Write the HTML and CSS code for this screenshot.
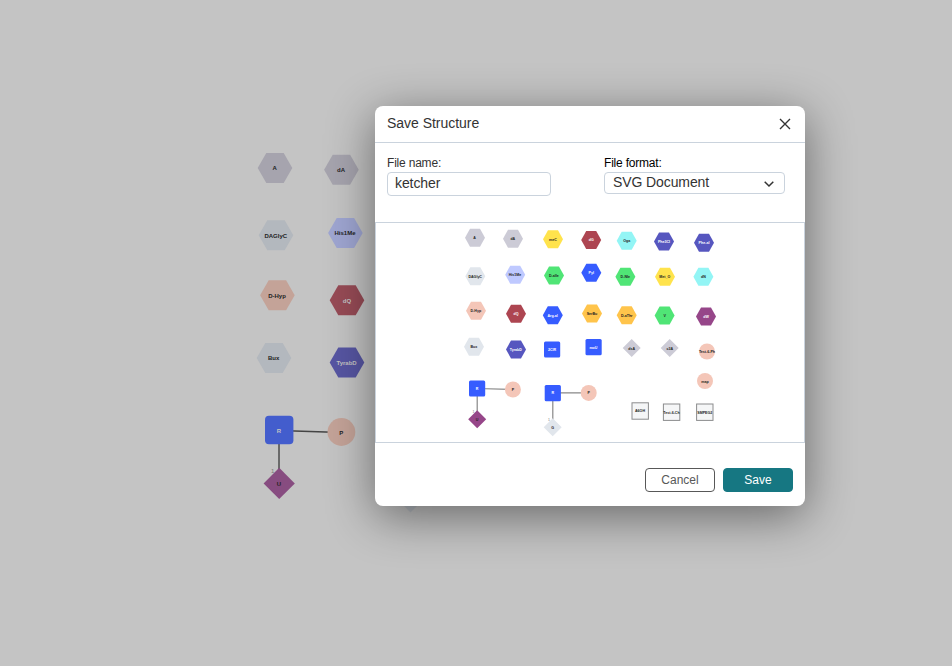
FILE: index.html
```
<!DOCTYPE html>
<html lang="en">
<head>
<meta charset="utf-8">
<title>Save Structure</title>
<link rel="stylesheet" href="styles.css">
</head>
<body>
<svg class="canvas" viewBox="0 0 952 666" aria-hidden="true">
  <defs>
    <path id="hex" d="M-10 0-5-9H5L10 0 5 9H-5Z"/>
    <path id="bighex" d="M-17.3 0-8.7-15H8.7L17.3 0 8.7 15H-8.7Z"/>
    <path id="diamond" d="M0-9 9 0 0 9-9 0Z"/>
  </defs>
  <g class="bond"><path d="M279 430V484M279 430.5 341 432.5"/></g>
  <use href="#bighex" x="275" y="168" fill="#a6a4ae"/>
  <use href="#bighex" x="341.4" y="169.8" fill="#a6a4ae"/>
  <use href="#bighex" x="276" y="235.2" fill="#b3b8be"/>
  <use href="#bighex" x="345.4" y="233" fill="#9fa6d2"/>
  <use href="#bighex" x="277.4" y="295.2" fill="#c4a398"/>
  <use href="#bighex" x="347" y="300.3" fill="#974b56"/>
  <use href="#bighex" x="274" y="358" fill="#b3b8be"/>
  <use href="#bighex" x="347" y="362.5" fill="#5756a3"/>
  <rect x="265" y="415.8" width="28.4" height="28.4" rx="4" fill="#435dcd"/>
  <circle cx="341.4" cy="432" r="13.9" fill="#c4a398"/>
  <path d="M279.2 467.8 294.8 483.5 279.2 499 263.6 483.5Z" fill="#874c80"/>
  <path d="M410.5 481.5 426 497 410.5 512.5 395 497Z" fill="#b3b8be"/>
  <g class="label big">
    <text x="274.6" y="170.3">A</text><text x="341" y="172.3">dA</text>
    <text x="275.8" y="238.3">DAGlyC</text><text x="345" y="235.3">His1Me</text>
    <text x="277" y="298.3">D-Hyp</text><text x="273.6" y="360.3">Bux</text>
    <text x="341.2" y="435.3">P</text><text x="279" y="486.3">U</text>
    <g class="pale"><text x="347" y="303.3">dQ</text><text x="346.6" y="365.3">TyrabD</text><text x="279" y="433.3">R</text></g>
  </g>
  <text class="index" x="271" y="473">1</text>
</svg>
<main class="dialog" role="dialog" aria-labelledby="title">
  <header class="header">
    <h1 id="title">Save Structure</h1>
    <svg class="close" viewBox="0 0 12 12"><path d="M1 1 11 11M11 1 1 11"/></svg>
  </header>
  <section class="fields">
    <div class="field name">
      <label>File name:</label>
      <div class="box"><span>ketcher</span></div>
    </div>
    <div class="field format">
      <label>File format:</label>
      <div class="box"><span>SVG Document</span>
        <svg class="chevron" viewBox="0 0 12 8"><path d="M1.7 1.7 6 6 10.3 1.7"/></svg>
      </div>
    </div>
  </section>
  <svg class="preview" viewBox="376 223 428 219">
    <g class="thin-bond"><path d="M477.2 388V419M477 388.5 513 389.5M552.8 393V427M553 392.8H589"/></g>
    <g fill="#cccbd6">
      <use href="#hex" x="475" y="237.8"/><use href="#hex" x="513" y="238.7"/>
      <use href="#diamond" x="631.7" y="348"/><use href="#diamond" x="669.7" y="348"/>
    </g>
    <g fill="#ffe34c"><use href="#hex" x="553" y="239.3"/><use href="#hex" x="665" y="276.7"/></g>
    <g fill="#ad4551"><use href="#hex" x="591.2" y="240"/><use href="#hex" x="516" y="313.8"/></g>
    <g fill="#93f5f5"><use href="#hex" x="626.7" y="240.7"/><use href="#hex" x="703.4" y="276.7"/></g>
    <g fill="#5656bf"><use href="#hex" x="664" y="241.4"/><use href="#hex" x="704" y="242.7"/><use href="#hex" x="516" y="349.4"/></g>
    <g fill="#e1e6ec"><use href="#hex" x="475.3" y="276.3"/><use href="#hex" x="474" y="346.8"/><use href="#diamond" x="552.7" y="427.2"/></g>
    <use href="#hex" x="515.2" y="274.7" fill="#bfc9ff"/>
    <g fill="#50e576"><use href="#hex" x="554" y="275.4"/><use href="#hex" x="625.4" y="276.7"/><use href="#hex" x="664.6" y="315.4"/></g>
    <g fill="#365cff">
      <use href="#hex" x="591.3" y="272.7"/><use href="#hex" x="552.8" y="315.3"/>
      <rect x="544" y="341.4" width="16.2" height="16.2" rx="1.5"/><rect x="585.5" y="339" width="16.2" height="16.2" rx="1.5"/>
      <rect x="469" y="380.4" width="16.2" height="16.2" rx="1.5"/><rect x="544.7" y="385" width="16.2" height="16.2" rx="1.5"/>
    </g>
    <g fill="#f4c6b8">
      <use href="#hex" x="476" y="310.7"/><circle cx="707" cy="351.5" r="8"/><circle cx="705" cy="381" r="8"/>
      <circle cx="512.9" cy="389.5" r="8"/><circle cx="588.7" cy="392.9" r="8"/>
    </g>
    <g fill="#ffc44b"><use href="#hex" x="592" y="313.6"/><use href="#hex" x="626.7" y="315.3"/></g>
    <g fill="#964689"><use href="#hex" x="706" y="316.6"/><use href="#diamond" x="477.2" y="419.2"/></g>
    <g class="chem"><rect x="632" y="402.8" width="16.4" height="16.4"/><rect x="663.4" y="404" width="16.4" height="16.4"/><rect x="696.6" y="404" width="16.4" height="16.4"/></g>
    <g class="label">
      <text x="474.6" y="239.2">A</text><text x="512.8" y="240.2">dA</text><text x="553" y="241.2">meC</text>
      <text x="626.7" y="242.2">Oga</text><text x="475.2" y="278.2">DAGlyC</text><text x="515" y="276.2">His1Me</text>
      <text x="553.8" y="277.2">D-aIle</text><text x="625.3" y="278.2">D-Nle</text><text x="664.8" y="278.2">Met_O</text>
      <text x="703.4" y="278.2">dN</text><text x="475.8" y="312.2">D-Hyp</text><text x="592" y="315.2">SerBu</text>
      <text x="626.7" y="317.2">D-aThr</text><text x="664.6" y="317.2">V</text><text x="473.8" y="348.2">Bux</text>
      <text x="631.7" y="350.2">dsA</text><text x="669.7" y="350.2">c3A</text><text x="707" y="353.2">Test-6-Ph</text>
      <text x="705" y="382.8">map</text><text x="640" y="412.2">A6OH</text><text x="671.5" y="413.6">Test-6-Ch</text>
      <text x="704.8" y="414.2">SMPEG2</text><text x="512.9" y="391.2">P</text><text x="588.7" y="394.2">P</text>
      <text x="477.1" y="421">U</text><text x="552.7" y="429">G</text>
      <g class="white">
        <text x="591.2" y="241.2">dG</text><text x="664" y="243.2">Phe3Cl</text><text x="704" y="244.2">Phe-al</text>
        <text x="591.3" y="274.2">Pyl</text><text x="516" y="315.2">dQ</text><text x="552.6" y="317.2">Arg-al</text>
        <text x="706" y="318.2">dW</text><text x="515.8" y="351.2">TyrabD</text><text x="552" y="351.2">2ClR</text>
        <text x="593.4" y="349.2">moU</text><text x="477" y="390.2">R</text><text x="552.7" y="394.2">R</text>
      </g>
    </g>
    <g class="index small"><text x="472.5" y="413">1</text><text x="548" y="421">1</text></g>
  </svg>
  <footer class="footer"><button class="button">Cancel</button><button class="button primary">Save</button></footer>
</main>
</body>
</html>
```
FILE: styles.css
```
* { box-sizing: border-box; }
body {
  margin: 0;
  width: 952px;
  height: 666px;
  overflow: hidden;
  display: grid;
  background: #c4c4c4;
  font-family: "Liberation Sans", sans-serif;
  color: #333;
}
.canvas { grid-area: 1 / 1; width: 952px; height: 666px; }
.dialog {
  grid-area: 1 / 1;
  position: relative;
  display: flex;
  flex-direction: column;
  width: 430px;
  height: 400px;
  margin: 106px 0 0 375px;
  border-radius: 8px;
  background: #fff;
  box-shadow: 0 10px 48px rgba(0, 0, 0, .48);
}
.header {
  display: flex;
  align-items: center;
  justify-content: space-between;
  height: 37px;
  padding: 0 14px 2px 12px;
  border-bottom: 1px solid #cad3dd;
}
h1 { margin: 0; font-size: 14px; font-weight: 400; line-height: 20px; letter-spacing: -.03px; }
.close { width: 12px; height: 12px; fill: none; stroke: #333; stroke-width: 1.4; margin-top: 2px; }
.fields { display: flex; height: 79px; padding: 12px 20px 0 12px; justify-content: space-between; }
.field { display: flex; flex-direction: column; }
.name { width: 164px; }
.format { width: 181px; color: #000; }
label { height: 17px; font-size: 12px; line-height: 16px; letter-spacing: -.2px; }
.box {
  display: flex;
  align-items: center;
  justify-content: space-between;
  height: 24px;
  padding: 0 8px 2px 7px;
  border: 1px solid #cad3dd;
  border-radius: 4px;
  font-size: 14px;
  letter-spacing: -.1px;
  color: #333;
}
.format .box { height: 22px; padding-left: 8px; padding-right: 9px; }
.chevron { width: 12px; height: 8px; fill: none; stroke: #333; stroke-width: 1.5; margin-top: 3px; }
.preview { display: block; width: 430px; height: 221px; border: 1px solid #cad3dd; }
.footer { display: flex; justify-content: flex-end; gap: 8px; padding: 25px 12px 0; }
.button {
  width: 70px;
  height: 24px;
  padding: 0;
  border: 1px solid #585858;
  border-radius: 4px;
  background: #fff;
  color: #585858;
  font: 12px/22px "Liberation Sans", sans-serif;
}
.button.primary { border-color: #167782; background: #167782; color: #fff; }
.label { font-size: 3.6px; font-weight: 700; text-anchor: middle; fill: #222; }
.label.big { font-size: 6px; }
.label .white { fill: #fff; }
.label .pale { fill: #c4c4c4; }
.bond { stroke: #444; stroke-width: 1.4; }
.thin-bond { stroke: #888; stroke-width: 1.2; }
.chem { fill: #f5f6f7; stroke: #8b8c8d; stroke-width: 1; }
.index { font-size: 6px; fill: #777; }
.index.small { font-size: 3.5px; }
```
